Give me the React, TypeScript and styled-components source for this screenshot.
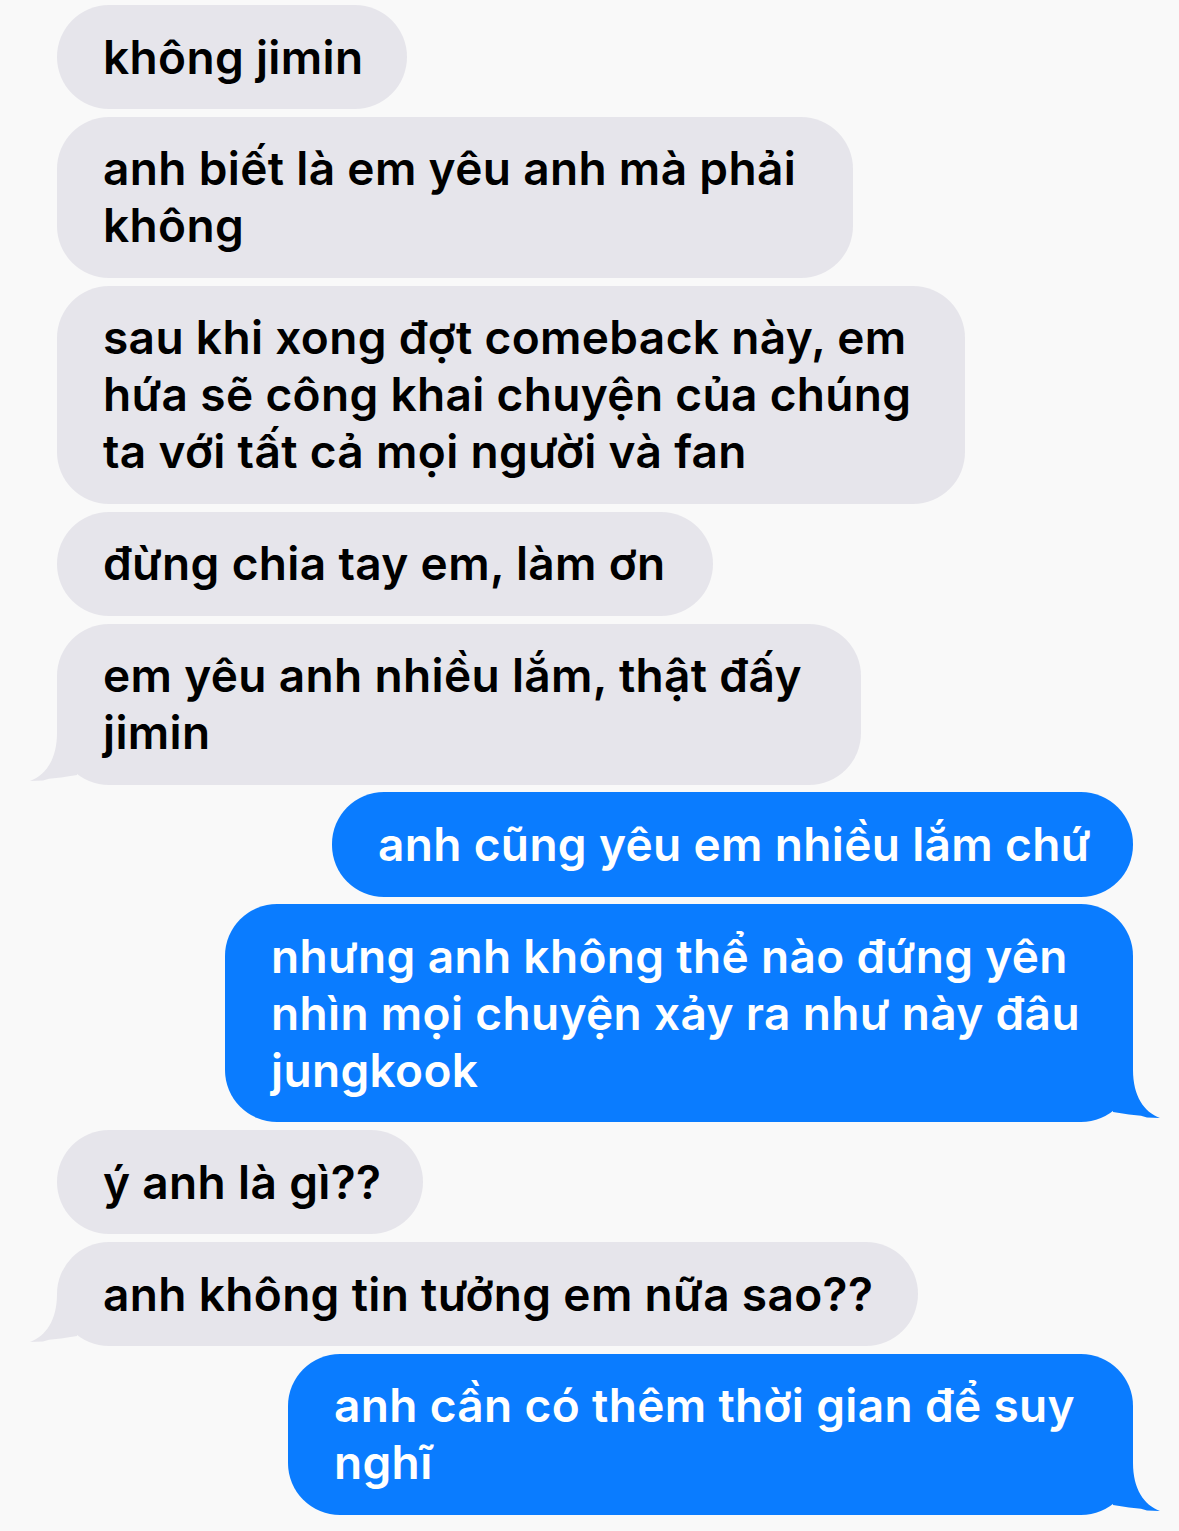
import React from 'react';
import styled, { createGlobalStyle } from 'styled-components';

const COLORS = {
  page: '#f9f9f9',
  grey: '#e6e5eb',
  blue: '#0a7cff',
};

const GlobalStyle = createGlobalStyle`
  html, body {
    margin: 0;
    padding: 0;
    background: ${COLORS.page};
  }
  body {
    font-family: Inter, "Noto Sans", "Liberation Sans", sans-serif;
    -webkit-font-smoothing: antialiased;
  }
`;

const Thread = styled.div`
  display: flex;
  flex-direction: column;
  gap: 7.7px;
  padding: 5px 46px 0 57px;
  width: 1179px;
  box-sizing: border-box;
`;

const Bubble = styled.div<{ $me?: boolean; $w: number }>`
  position: relative;
  align-self: ${(p) => (p.$me ? 'flex-end' : 'flex-start')};
  width: ${(p) => p.$w}px;
  box-sizing: border-box;
  padding: 23.6px 46px;
  border-radius: 52px;
  background: ${(p) => (p.$me ? COLORS.blue : COLORS.grey)};
  color: ${(p) => (p.$me ? '#fff' : '#000')};
  font-size: 46px;
  font-weight: 600;
  line-height: 57px;
  letter-spacing: 0.35px;
  white-space: nowrap;
`;

const Tail = styled.svg<{ $me?: boolean }>`
  position: absolute;
  bottom: 0;
  width: 60px;
  height: 60px;
  ${(p) => (p.$me ? 'right: -30px; transform: scaleX(-1);' : 'left: -30px;')}
`;

const BubbleTail = ({ me }: { me?: boolean }) => (
  <Tail $me={me} viewBox="0 0 60 60">
    <path
      d="M30 8 C30 34 19 50 3 56 L16 55.6 L22 53.8 L34 52.6 L50 50 L50 8 Z"
      fill={me ? COLORS.blue : COLORS.grey}
    />
  </Tail>
);

type Msg = { me?: boolean; w: number; lines: string[]; tail?: boolean };

const MESSAGES: Msg[] = [
  { w: 350, lines: ['không jimin'] },
  { w: 796, lines: ['anh biết là em yêu anh mà phải', 'không'] },
  {
    w: 908,
    lines: ['sau khi xong đợt comeback này, em', 'hứa sẽ công khai chuyện của chúng', 'ta với tất cả mọi người và fan'],
  },
  { w: 656, lines: ['đừng chia tay em, làm ơn'] },
  { w: 804, lines: ['em yêu anh nhiều lắm, thật đấy', 'jimin'], tail: true },
  { me: true, w: 801, lines: ['anh cũng yêu em nhiều lắm chứ'] },
  {
    me: true,
    w: 908,
    lines: ['nhưng anh không thể nào đứng yên', 'nhìn mọi chuyện xảy ra như này đâu', 'jungkook'],
    tail: true,
  },
  { w: 366, lines: ['ý anh là gì??'] },
  { w: 861, lines: ['anh không tin tưởng em nữa sao??'], tail: true },
  { me: true, w: 845, lines: ['anh cần có thêm thời gian để suy', 'nghĩ'], tail: true },
];

export default function App() {
  return (
    <>
      <GlobalStyle />
      <Thread>
        {MESSAGES.map((m, i) => (
          <Bubble key={i} $me={m.me} $w={m.w}>
            {m.lines.map((l, j) => (
              <div key={j}>{l}</div>
            ))}
            {m.tail && <BubbleTail me={m.me} />}
          </Bubble>
        ))}
      </Thread>
    </>
  );
}
